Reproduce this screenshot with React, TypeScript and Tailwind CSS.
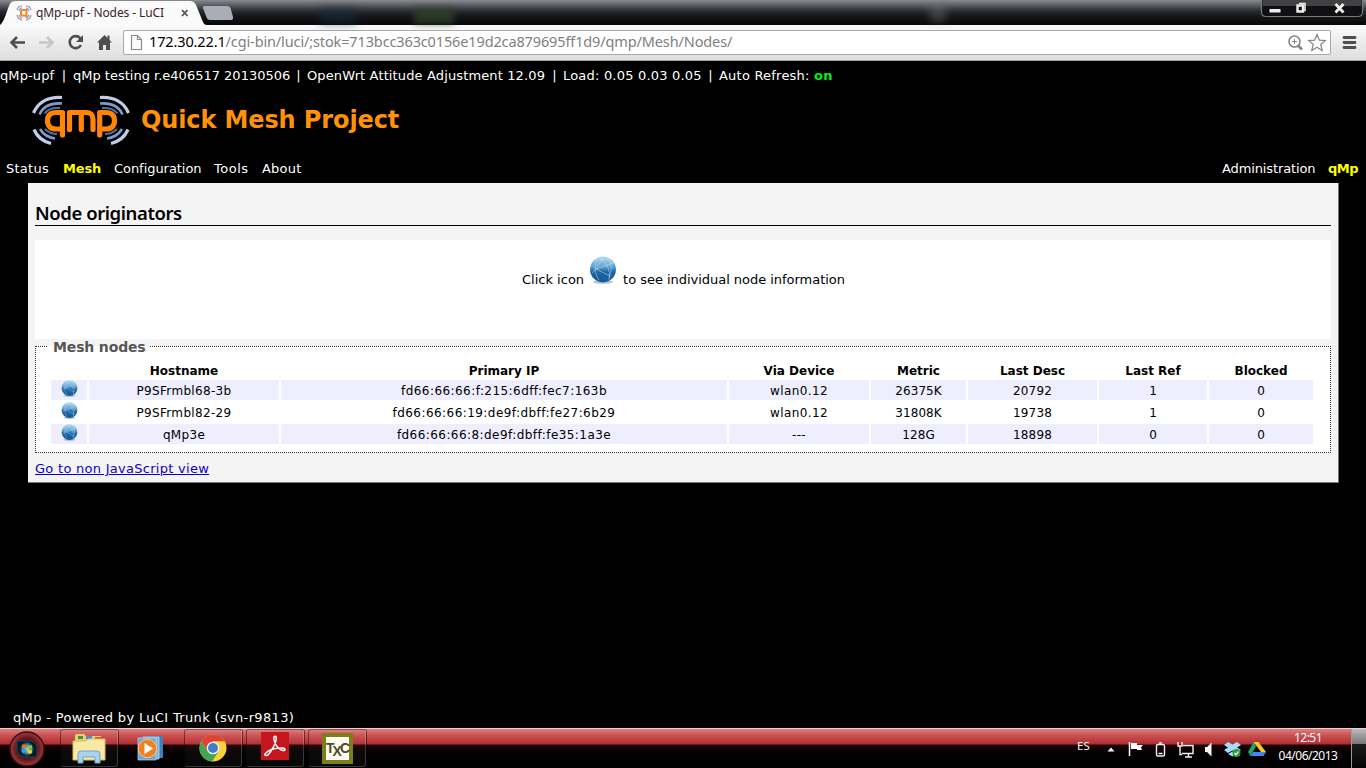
import React from "react";

const COLS = "grid grid-cols-[36px_190px_446px_140px_95px_129px_108px_104px] gap-x-[2px]";

const HEAD = ["", "Hostname", "Primary IP", "Via Device", "Metric", "Last Desc", "Last Ref", "Blocked"];

const ROWS = [
  ["P9SFrmbl68-3b", "fd66:66:66:f:215:6dff:fec7:163b", "wlan0.12", "26375K", "20792", "1", "0"],
  ["P9SFrmbl82-29", "fd66:66:66:19:de9f:dbff:fe27:6b29", "wlan0.12", "31808K", "19738", "1", "0"],
  ["qMp3e", "fd66:66:66:8:de9f:dbff:fe35:1a3e", "---", "128G", "18898", "0", "0"],
];

const TRACKING = [
  "tracking-[0.32px]",
  "tracking-[0.44px]",
  "tracking-[0.38px]",
  "tracking-[0.1px]",
  "tracking-[0.2px]",
  "",
  "",
];

function Globe({ className }: { className: string }) {
  return (
    <svg viewBox="0 0 28 28" className={className}>
      <defs>
        <linearGradient id="globe" x1="0" y1="0" x2="0" y2="1">
          <stop offset="0" stopColor="#b4dcf0" />
          <stop offset="0.4" stopColor="#5da2d0" />
          <stop offset="0.6" stopColor="#1c66a4" />
          <stop offset="1" stopColor="#15589a" />
        </linearGradient>
      </defs>
      <ellipse cx="14" cy="26" rx="10" ry="1.8" fill="#9fb4c8" opacity="0.8" />
      <circle cx="14" cy="13.4" r="13" fill="url(#globe)" />
      <g fill="none" stroke="#cfe8f6" strokeWidth="0.8" opacity="0.6">
        <path d="M9 2C5 9 5 17 10 24M9 2c8 3 13 11 11 22M7 13l17-6M7 13l14 7M7 13l6-10M3 17l4-4M13 3c5 0 9 2 11 4M19 2c4 6 4 14 1 20" />
      </g>
    </svg>
  );
}

function QmpLogo() {
  return (
    <svg viewBox="0 0 100 52" className="h-[52px] w-[100px]">
      <g fill="none" strokeLinecap="butt">
        <g stroke="#c3cde6" strokeWidth="3.2">
          <path d="M2.500 19C7 8.500 17 2.500 31 3.500" />
          <path d="M97.500 19C93 8.500 83 2.500 69 3.500" />
          <path d="M3 35.500c3 7 9 12 17 14" />
          <path d="M97 35.500c-3 7-9 12-17 14" />
        </g>
        <g stroke="#7f9bcb" strokeWidth="2.6">
          <path d="M8.500 20.500C12 12.500 19 8.500 31 9.500" />
          <path d="M91.500 20.500C88 12.500 81 8.500 69 9.500" />
          <path d="M9 35c3 5 8 8.500 15 9.500" />
          <path d="M91 35c-3 5-8 8.500-15 9.500" />
        </g>
        <g stroke="#54709f" strokeWidth="2">
          <path d="M13.500 19.500c3-4 8-6 15.500-5.500" />
          <path d="M86.500 19.500c-3-4-8-6-15.500-5.500" />
          <path d="M14 35c3 3 7 5 12 5" />
          <path d="M86 35c-3 3-7 5-12 5" />
        </g>
      </g>
      <g fill="none" stroke="#ff8408" strokeWidth="5.2" strokeLinecap="round" strokeLinejoin="round">
        <path d="M31.500 41V18.500H25c-5.500 0-8.500 3-8.500 8.200S19.500 35 25 35h5.500" />
        <path d="M38.500 35.500V18.500H55c5 0 7 2 7 7v10M50.300 19.500v16" />
        <path d="M68.700 41V18.500H75c5.500 0 8.500 3 8.500 8.200S80.500 35 75 35h-5.500" />
      </g>
    </svg>
  );
}

function BrowserChrome() {
  return (
    <div className="h-[61px] shrink-0">
      <div className="flex h-[25px] bg-[linear-gradient(to_bottom,#8a8b90_0px,#5d5e63_5px,#2b2c30_11px,#16171a_16px,#09090b_24px)]">
        <svg viewBox="0 0 250 25" className="h-[25px] w-[250px]">
          <path d="M0 25C5 22 8 5 11 2.500Q12.500 1 15 1H190Q194 1 196 5L203 22Q204 25 207 25Z" fill="#fafafa" />
          <path d="M204 6H227Q229.500 6 230.500 8L233 17Q233.500 20 231 20H210Q207.500 20 206.500 17.500L203 8Q202.500 6 204 6Z" fill="#a9adb5" />
          <g fill="none" stroke="#8f96c4" strokeWidth="1.200">
            <path d="M17 10q1-4 5-4M26 6q4 0 5 4M17 15q1 4 5 5M26 20q4-1 5-5M19 11q1-3 3-3M29 11q-1-3-3-3M19 15q1 2 3 3M29 15q-1 2-3 3" />
          </g>
          <path d="M26.500 18V10H22.500Q21 10 21 11.500V14Q21 15.500 22.500 15.500H26" fill="none" stroke="#f08a24" strokeWidth="2" />
          <path d="M182 10l5.500 6M187.500 10l-5.500 6" stroke="#555" strokeWidth="1.800" />
          <text x="36" y="17" fontSize="12" textLength="128" fill="#3a1c2c" className="font-['Noto_Sans',sans-serif]">qMp-upf - Nodes - LuCI</text>
        </svg>
        <div className="ml-[70px] mt-[8px] h-[16px] w-[36px] bg-[#14303a] opacity-50 blur-[4px]" />
        <div className="ml-[58px] mt-[8px] h-[16px] w-[40px] bg-[#33442c] opacity-70 blur-[3px]" />
        <div className="ml-[476px] mt-[2px] h-[20px] w-[16px] bg-[#77787c] opacity-40 blur-[4px]" />
        <div className="flex-1" />
        <svg viewBox="0 0 106 25" className="h-[25px] w-[106px]">
          <path d="M1.500 0V12Q1.500 16.500 6 16.500H98Q102.500 16.500 102.500 12V0" fill="#111113" stroke="#77787b" strokeWidth="1.200" />
          <rect x="2.500" y="0" width="99" height="6" fill="#55565a" opacity="0.7" />
          <rect x="9.500" y="9" width="11" height="3.500" fill="#eee" />
          <path d="M39 3.500h6v7h-1.500" fill="none" stroke="#eee" strokeWidth="1.500" />
          <path d="M37.500 5.500h5.500v6h-5.500z" fill="none" stroke="#eee" strokeWidth="2.400" />
          <path d="M75.500 4l8 8.500M83.500 4l-8 8.500" stroke="#eee" strokeWidth="2.800" />
        </svg>
      </div>
      <div className="flex h-[36px] items-start border-b border-[#a5a5a5] bg-linear-to-b from-[#fafafa] to-[#dedede]">
        <svg viewBox="0 0 123 35" className="h-[35px] w-[123px] shrink-0">
          <g fill="none" stroke="#4f4f4f" strokeWidth="2.600">
            <path d="M25 17.500H12M17 12l-5.500 5.500L17 23" />
            <path d="M39 17.500h13M47 12l5.500 5.500L47 23" stroke="#c6c6c6" />
            <path d="M80.500 13.500A6 6 0 1 0 81 20" />
          </g>
          <path d="M83 10v7h-7z" fill="#4f4f4f" />
          <path d="M104.500 10L97 17.500h2V25h4v-5h3v5h4v-7.500h2L109.500 15v-4.500h-2V13z" fill="#4f4f4f" />
        </svg>
        <div className="mt-[5px] flex h-[25px] w-[1208px] items-center rounded-[2px] border border-[#a9a9a9] bg-white">
          <svg viewBox="0 0 24 23" className="h-[23px] w-[24px] shrink-0">
            <path d="M7.500 4.500h6l4 4V18.500h-10zM13.500 4.500v4h4" fill="#fafafa" stroke="#8a8a8a" strokeWidth="1.200" />
          </svg>
          <div className="flex-1 whitespace-pre pb-[2px] pl-px font-['Noto_Sans',sans-serif] text-[14.500px] leading-[21px] tracking-[-0.130px] text-[#808080]">
            <span className="text-black">172.30.22.1</span>/cgi-bin/luci/;stok=713bcc363c0156e19d2ca879695ff1d9/qmp/Mesh/Nodes/
          </div>
          <svg viewBox="0 0 46 23" className="h-[23px] w-[46px] shrink-0">
            <g fill="none" stroke="#858585">
              <circle cx="10.500" cy="10.500" r="5.500" strokeWidth="1.600" />
              <path d="M8 10.500h5M10.500 8v5" />
              <path d="M14 14.500l4 4" strokeWidth="2.600" />
              <path d="M33 3.500l2.300 5.600 6 .5-4.600 3.900 1.500 5.900-5.200-3.200-5.200 3.200 1.500-5.900-4.600-3.900 6-.5z" strokeWidth="1.200" />
            </g>
          </svg>
        </div>
        <svg viewBox="0 0 35 35" className="h-[35px] w-[35px] shrink-0">
          <path d="M13 12.500h11M13 17.500h11M13 22.500h11" stroke="#4f4f4f" strokeWidth="2.800" strokeLinecap="round" />
        </svg>
      </div>
    </div>
  );
}

function StartOrb() {
  return (
    <svg viewBox="0 0 60 39" className="h-[39px] w-[60px] shrink-0">
      <defs>
        <radialGradient id="orb">
          <stop offset="0" stopColor="#2a0808" />
          <stop offset="0.6" stopColor="#5a1418" />
          <stop offset="1" stopColor="#a23a40" />
        </radialGradient>
        <radialGradient id="orbglow">
          <stop offset="0" stopColor="#9fe6f5" />
          <stop offset="0.6" stopColor="#2b86a8" />
          <stop offset="1" stopColor="#0b2f40" />
        </radialGradient>
      </defs>
      <circle cx="27" cy="20" r="17" fill="url(#orb)" stroke="#3a1012" strokeWidth="1.500" />
      <path d="M17 12H31Q37 14 37 20V28H24Q17 26 17 20Z" fill="#081820" stroke="#1d4a58" />
      <circle cx="27" cy="20" r="7" fill="url(#orbglow)" />
      <path d="M22 16q2.500-1.500 4.500 0v3.500q-2-1.500-4.500 0z" fill="#e8702e" />
      <path d="M27.500 16q2.500 1.500 4.500 0v3.500q-2 1.500-4.500 0z" fill="#8cc63f" />
      <path d="M22 20.500q2.500-1.500 4.500 0v3.500q-2-1.500-4.500 0z" fill="#3ba0dc" />
      <path d="M27.500 20.500q2.500 1.500 4.500 0v3.500q-2 1.500-4.500 0z" fill="#f6c830" />
    </svg>
  );
}

function TaskButton({ children, plain = false }: { children: React.ReactNode; plain?: boolean }) {
  return (
    <div className={plain ? "flex h-[38px] w-[58px] items-center justify-center" : "flex h-[38px] w-[58px] items-center justify-center rounded-[3px] border border-[#ffffff30] border-t-[#00000060] border-l-[#00000070] bg-[#ffffff08] shadow-[1px_0_0_#00000080]"}>
      {children}
    </div>
  );
}

function Taskbar() {
  return (
    <div className="flex h-[40px] shrink-0 items-start border-t border-[#efd0d0] bg-[linear-gradient(to_bottom,#df7f7f_0px,#cb5355_6px,#b02e31_15px,#1a0406_16px,#050102_24px,#000_39px)]">
      <StartOrb />
      <div className="flex gap-[4px]">
        <TaskButton>
          <svg viewBox="0 0 34 32" className="h-[32px] w-[34px]">
            <path d="M3 4q0-2 2-2h7l2 2h15v22H3z" fill="#e8cf76" />
            <path d="M6 4h5v3H6z" fill="#3a9a3a" /><path d="M14 4h6v3h-6z" fill="#4a8fd0" /><path d="M23 5h6v3h-6z" fill="#d84a30" />
            <path d="M1 9h13l2-2h17v21H1z" fill="#f8e9a4" stroke="#d8bd5c" />
            <path d="M6 31V22q0-3 3-3h16q3 0 3 3v9h-5v-6H11v6z" fill="#a9d2ee" stroke="#6ba4cc" />
          </svg>
        </TaskButton>
        <TaskButton plain>
          <svg viewBox="0 0 28 28" className="h-[28px] w-[28px]">
            <path d="M10 2h16v22H10z" fill="#3d7fba" />
            <path d="M6 3h16v22H6z" fill="#7db4de" stroke="#cfe4f4" strokeWidth="0.700" />
            <path d="M1 4h18v22H1z" fill="#6aa6d6" stroke="#b9d9f0" strokeWidth="0.700" />
            <circle cx="10.500" cy="14.500" r="9.200" fill="#f08020" stroke="#fbc890" />
            <path d="M7.500 9v11l8.500-5.500z" fill="#fff" />
          </svg>
        </TaskButton>
        <TaskButton>
          <svg viewBox="0 0 28 28" className="h-[28px] w-[28px]">
            <circle cx="14" cy="14" r="13.500" fill="#fbd23c" />
            <path d="M14 14L8.300 17.300 2.300 7.200A13.500 13.500 0 0 1 25.700 7.300H14z" fill="#dc4435" />
            <path d="M2.300 7.200A13.500 13.500 0 0 0 13 27.500L19.500 17.500 14 20 8.300 17.300z" fill="#3fa652" />
            <circle cx="14" cy="14" r="6.300" fill="#f5f5f5" />
            <circle cx="14" cy="14" r="5" fill="#4180c8" />
          </svg>
        </TaskButton>
        <TaskButton>
          <svg viewBox="0 0 28 28" className="mb-[4px] h-[28px] w-[28px]">
            <rect width="28" height="28" fill="#c4161c" />
            <path d="M4 22c3-4 9-6 17-6 4 0 3.500 3 1 2.500C17 17.500 13 11 12.800 6.500c0-3 2.700-3 2.500 0C15 12 8 23.500 5.500 23.500 4.500 23.500 3.500 23 4 22z" fill="none" stroke="#fff" strokeWidth="1.500" />
          </svg>
        </TaskButton>
        <TaskButton>
          <div className="flex h-[31px] w-[31px] items-center justify-center border-[4px] border-[#7d7d1c] bg-[#fdfdf4] font-['Liberation_Sans',sans-serif] text-[14px] font-bold tracking-[-2px] text-[#4c4c20]">
            T<span className="translate-y-[3px]">X</span>C
          </div>
        </TaskButton>
      </div>
      <div className="flex-1" />
      <div className="w-[17px] pt-[8px] font-['Noto_Sans',sans-serif] text-[11.500px] leading-[18px] text-[#f4f4f4]">ES</div>
      <svg viewBox="0 0 180 39" className="h-[39px] w-[180px]">
        <path d="M13.500 22.500l3.500-4 3.500 4z" fill="#f4f4f4" />
        <path d="M35.500 13v14" stroke="#fff" strokeWidth="1.500" />
        <path d="M37 14h6v2h6l-2 2.500 1 2.500h-5v-1h-6z" fill="#fff" />
        <g fill="none" stroke="#f2f2f2" strokeWidth="1.400">
          <rect x="62.500" y="15.500" width="8" height="11.500" rx="1.500" />
          <path d="M65 14h3M64.500 24.500h4" />
          <path d="M89 16.500h10v8H88M91 28h7M94.500 25v3M84 13v4h4v-4M86 17v8.500h2" />
        </g>
        <path d="M111 18h2l4.500-4.500v14L113 23h-2z" fill="#f4f4f4" />
        <path d="M134 13l4.500 2.500L143 13l4 3-4 2.500 4 2.500-4 3-4.500-2.500L134 24l-4-3 4-2.500-4-2.500zM134 25l4.500-2.500L143 25l-4.500 2.500z" fill="#a8dafc" />
        <circle cx="142.500" cy="24" r="4" fill="#2f9c3a" />
        <path d="M140.500 24l1.500 1.800 2.500-3.300" fill="none" stroke="#fff" strokeWidth="1.200" />
        <path d="M159.500 13h5l7.500 10h-5z" fill="#f8c928" />
        <path d="M159.500 13l2.500 4.500-5.500 9.500-2.500-4z" fill="#1fa463" />
        <path d="M159 23h13l-2.500 4h-13z" fill="#4285f4" />
      </svg>
      <div className="mr-[9px] w-[68px] whitespace-nowrap text-center font-['Noto_Sans',sans-serif] text-[12px] leading-[18px] tracking-[-0.500px] text-white">
        <div>12:51</div>
        <div>04/06/2013</div>
      </div>
      <div className="h-[39px] w-[15px] border-l border-[#999] bg-[linear-gradient(to_bottom,#bbb_0px,#777_15px,#1a1a1a_15px,#050505_39px)]" />
    </div>
  );
}

export default function App() {
  return (
    <div className="flex h-[768px] w-[1366px] flex-col overflow-hidden bg-black font-['DejaVu_Sans',sans-serif] text-[13px]">
      <BrowserChrome />
      <header className="h-[122px] shrink-0 text-white">
        <div className="flex h-[31px] whitespace-pre leading-[29px]">
          <span className="w-[55px] tracking-[0.1px]">qMp-upf</span>
          <span className="w-[18px] text-center">|</span>
          <span className="w-[217px]">qMp testing r.e406517 20130506</span>
          <span className="w-[17px] text-center">|</span>
          <span className="w-[239px] tracking-[0.13px]">OpenWrt Attitude Adjustment 12.09</span>
          <span className="w-[17px] text-center">|</span>
          <span className="w-[139px] tracking-[0.2px]">Load: 0.05 0.03 0.05</span>
          <span className="w-[17px] text-center">|</span>
          <span className="tracking-[0.22px]">Auto Refresh: <b className="text-[#00f018]">on</b></span>
        </div>
        <div className="flex h-[62px] items-start pl-[31px] pt-[2px]">
          <QmpLogo />
          <h1 className="ml-[10px] text-[24px] font-bold leading-[53px] tracking-[-0.120px] text-[#ff9208]">Quick Mesh Project</h1>
        </div>
        <nav className="flex h-[29px] whitespace-pre pl-[6px] pr-[8px] leading-[29px]">
          <span className="w-[57px] tracking-[0.25px]">Status</span>
          <b className="w-[51px] tracking-[-0.150px] text-[#ffff00]">Mesh</b>
          <span className="w-[100px] tracking-[-0.050px]">Configuration</span>
          <span className="w-[48px] tracking-[0.5px]">Tools</span>
          <span className="tracking-[0.2px]">About</span>
          <span className="flex-1" />
          <span className="w-[106px] tracking-[-0.120px]">Administration</span>
          <b className="w-[30px] tracking-[-0.500px] text-[#ffff00]">qMp</b>
        </nav>
      </header>
      <main className="ml-[28px] flex h-[300px] w-[1311px] shrink-0 flex-col border-b border-r border-[#777] bg-[#f4f4f4] pl-[7px] pr-[7px] text-black">
        <h2 className="h-[43px] shrink-0 border-b border-black pt-[17px] font-['Noto_Sans',sans-serif] text-[18.500px] font-semibold leading-[26px] tracking-[-0.420px]">Node originators</h2>
        <div className="mt-[14px] flex h-[99px] shrink-0 justify-center bg-white pl-px pt-[16px]">
          <span className="pt-[14px] leading-[20px]">Click icon</span>
          <Globe className="ml-[5px] mr-[6px] h-[28px] w-[28px]" />
          <span className="pt-[14px] leading-[20px] tracking-[-0.030px]">to see individual node information</span>
        </div>
        <fieldset className="mt-[-2px] h-[116px] shrink-0 border border-dotted border-[#333] bg-white pl-[15px]">
          <legend className="ml-[-3px] pl-[5px] pr-[4px] pt-[2px] text-[14px] font-bold leading-[16px] tracking-[-0.150px] text-[#555]">Mesh nodes</legend>
          <div className={COLS + " mt-[5px] h-[20px] text-center text-[12px] font-bold leading-[22px]"}>
            {HEAD.map((h, i) => <div key={i}>{h}</div>)}
          </div>
          <div className="flex flex-col gap-[2px]">
            {ROWS.map((r, i) => (
              <div key={i} className={COLS + " h-[20px] text-center text-[12px] leading-[22px]"}>
                <div className={i % 2 ? "flex h-[20px] justify-center" : "flex h-[20px] justify-center bg-[#eeeeff]"}><Globe className="h-[17px] w-[17px]" /></div>
                {r.map((c, j) => <div key={j} className={TRACKING[j] + (i % 2 ? " h-[20px]" : " h-[20px] bg-[#eeeeff]")}>{c}</div>)}
              </div>
            ))}
          </div>
        </fieldset>
        <a className="mt-[6px] leading-[20px] tracking-[0.28px] text-[#0f00c8] underline">Go to non JavaScript view</a>
      </main>
      <div className="flex-1" />
      <footer className="shrink-0 pl-[13px] leading-[20px] tracking-[0.340px] text-white">qMp - Powered by LuCI Trunk (svn-r9813)</footer>
      <Taskbar />
    </div>
  );
}
